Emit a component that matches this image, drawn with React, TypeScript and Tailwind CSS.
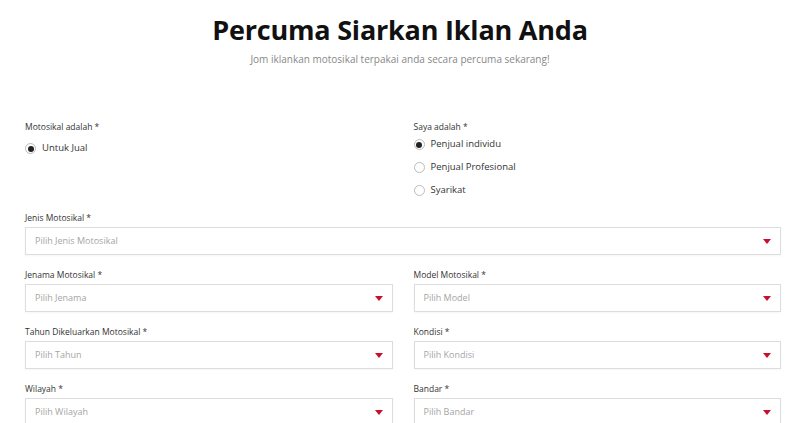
import type { ReactNode } from 'react';

const FONT = { fontFamily: '"Open Sans", "Liberation Sans", sans-serif' };

function Caret() {
  return (
    <svg width="8" height="5" viewBox="0 0 8 5" className="shrink-0">
      <path d="M0 0 H8 L4 5 Z" fill="#c8102e" />
    </svg>
  );
}

function Radio({ label, checked }: { label: string; checked?: boolean }) {
  return (
    <label className="flex items-center gap-[6px] h-[23px] text-[9.5px] text-[#333]">
      <span className="w-[11px] h-[11px] rounded-full border border-[#bbb] flex items-center justify-center bg-white">
        {checked && <span className="w-[6px] h-[6px] rounded-full bg-[#222]" />}
      </span>
      {label}
    </label>
  );
}

function Field({ label, placeholder }: { label: string; placeholder: string }) {
  return (
    <div className="flex flex-col">
      <div className="text-[8.5px] text-[#333] h-[15px] leading-[15px]">{label}</div>
      <div className="mt-[2px] h-[28px] border border-[#ddd] bg-white flex items-center justify-between pl-[9px] pr-[9px] shadow-[0_1px_2px_rgba(0,0,0,0.04)]">
        <span className="text-[9px] text-[#a5a5a5]">{placeholder}</span>
        <Caret />
      </div>
    </div>
  );
}

function Row({ children }: { children: ReactNode }) {
  return <div className="grid grid-cols-2 gap-x-[21px]">{children}</div>;
}

export default function App() {
  return (
    <div className="w-[800px] h-[423px] overflow-hidden bg-white" style={FONT}>
      <div className="flex flex-col items-center pt-[13px]">
        <h1 className="text-[27px] leading-[34px] font-bold text-[#111] tracking-[-0.2px]">
          Percuma Siarkan Iklan Anda
        </h1>
        <p className="mt-[5px] text-[10px] text-[#888]">Jom iklankan motosikal terpakai anda secara percuma sekarang!</p>
      </div>

      <div className="pl-[25px] pr-[19px] mt-[52px] flex flex-col gap-[12px]">
        <Row>
          <div>
            <div className="text-[8.5px] text-[#333] h-[15px] leading-[15px]">Motosikal adalah *</div>
            <div className="mt-[3px]">
              <Radio label="Untuk Jual" checked />
            </div>
          </div>
          <div>
            <div className="text-[8.5px] text-[#333] h-[15px] leading-[15px]">Saya adalah *</div>
            <div className="-mt-[1px]">
              <Radio label="Penjual individu" checked />
              <Radio label="Penjual Profesional" />
              <Radio label="Syarikat" />
            </div>
          </div>
        </Row>
        <div className="-mt-[4px]">
          <Field label="Jenis Motosikal *" placeholder="Pilih Jenis Motosikal" />
        </div>
        <Row>
          <Field label="Jenama Motosikal *" placeholder="Pilih Jenama" />
          <Field label="Model Motosikal *" placeholder="Pilih Model" />
        </Row>
        <Row>
          <Field label="Tahun Dikeluarkan Motosikal *" placeholder="Pilih Tahun" />
          <Field label="Kondisi *" placeholder="Pilih Kondisi" />
        </Row>
        <Row>
          <Field label="Wilayah *" placeholder="Pilih Wilayah" />
          <Field label="Bandar *" placeholder="Pilih Bandar" />
        </Row>
      </div>
    </div>
  );
}
